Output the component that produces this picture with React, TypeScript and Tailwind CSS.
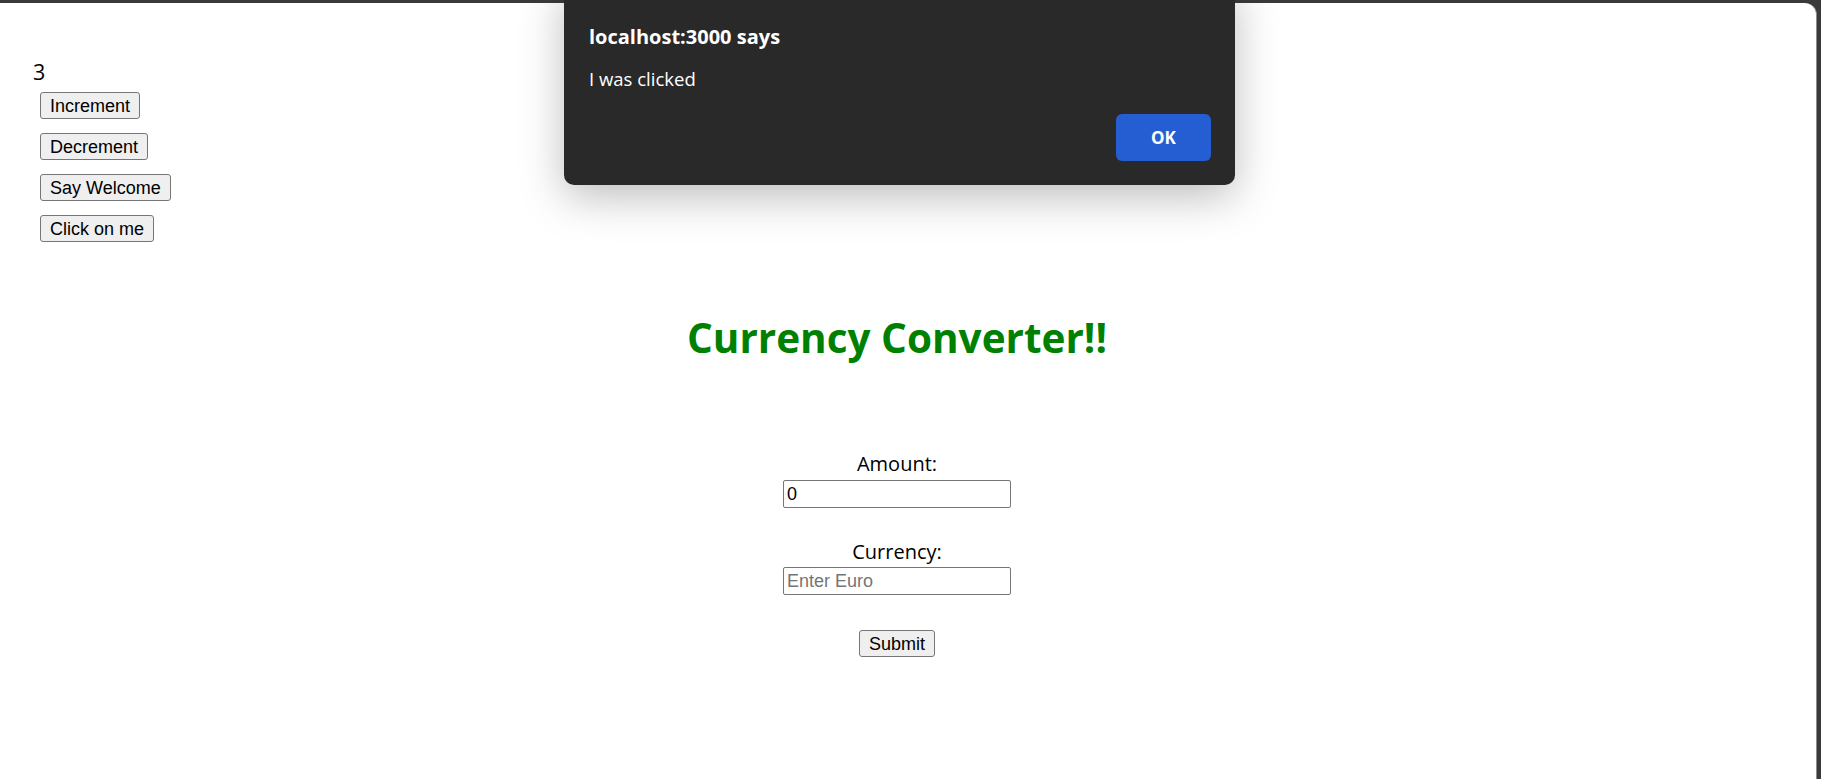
import React from "react";

const sans = { fontFamily: '"Open Sans", "Noto Sans", sans-serif' };

function Btn({ children }: { children: React.ReactNode }) {
  return (
    <button
      className="h-[27px] px-[9px] border border-[#767676] bg-[#efefef] rounded-[3px] text-black text-[18px] leading-none font-['Liberation_Sans',Arial,sans-serif]"
    >
      {children}
    </button>
  );
}

export default function App() {
  return (
    <div className="relative h-screen w-full overflow-hidden bg-[#3a3a3a] pt-[3px] pr-[4px]">
      <div className="h-full bg-white rounded-tr-[12px] border-r border-[#8c8c8c] font-['Open_Sans','Noto_Sans',sans-serif] text-black">
        <div className="pl-[33px] pt-[55px]">
          <div className="text-[21.5px] leading-[28px]">3</div>
          <div className="mt-[6px] pl-[7px] flex flex-col items-start gap-[14px]">
            <Btn>Increment</Btn>
            <Btn>Decrement</Btn>
            <Btn>Say Welcome</Btn>
            <Btn>Click on me</Btn>
          </div>
        </div>
        <div className="w-[1794px] flex flex-col items-center">
          <h1 className="mt-[68px] text-[40.5px] leading-[56px] font-bold text-[#008000]">Currency Converter!!</h1>
          <div className="mt-[84px] flex flex-col items-center">
            <label className="mb-[2px] text-[20px] leading-[28px]">Amount:</label>
            <input
              defaultValue="0"
              className="w-[228px] h-[28px] border border-[#767676] rounded-[2px] px-[3px] text-[18px] text-black outline-none font-['Liberation_Sans',Arial,sans-serif]"
            />
            <label className="mt-[30px] mb-[1px] text-[20px] leading-[28px]">Currency:</label>
            <input
              placeholder="Enter Euro"
              className="w-[228px] h-[28px] border border-[#767676] rounded-[2px] px-[3px] text-[18px] text-black placeholder:text-[#757575] outline-none font-['Liberation_Sans',Arial,sans-serif]"
            />
            <div className="mt-[35px]">
              <Btn>Submit</Btn>
            </div>
          </div>
        </div>
      </div>
      <div
        className="absolute left-[564px] top-[-20px] w-[671px] h-[205px] rounded-[10px] bg-[#292929] shadow-[0_12px_44px_rgba(0,0,0,0.26)] pl-[25px] pr-[24px] pt-[44px] text-white"
        style={sans}
      >
        <div className="text-[20px] leading-[26px] font-bold">localhost:3000 says</div>
        <div className="mt-[16px] text-[18.5px] leading-[26px]">I was clicked</div>
        <div className="mt-[22px] flex justify-end">
          <button className="w-[95px] h-[47px] rounded-[6px] bg-[#245ed2] text-white text-[17px] font-bold">OK</button>
        </div>
      </div>
    </div>
  );
}
